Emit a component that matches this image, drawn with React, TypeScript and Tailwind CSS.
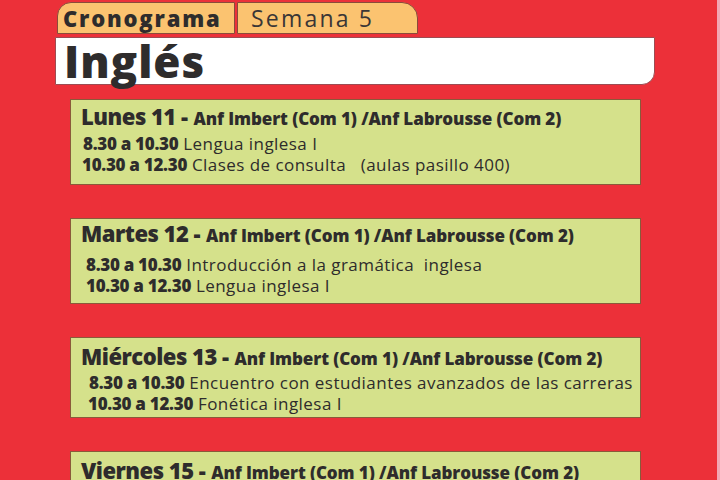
const days = [
  {
    day: "Lunes 11",
    pt: "pt-[3px]",
    gap: "mt-[1px]",
    indent: "pl-[1px]",
    h: "h-[86px]",
    rows: [
      ["8.30 a 10.30", "Lengua inglesa I", "pl-[1px]"],
      ["10.30 a 12.30", "Clases de consulta \u00a0 (aulas pasillo 400)", ""],
    ],
  },
  {
    day: "Martes 12",
    pt: "pt-[1px]",
    gap: "mt-[5px]",
    indent: "pl-[5px]",
    h: "h-[86px]",
    rows: [
      ["8.30 a 10.30", "Introducción a la gramática \u00a0inglesa", "pl-[0px]"],
      ["10.30 a 12.30", "Lengua inglesa I", ""],
    ],
  },
  {
    day: "Miércoles 13",
    pt: "pt-[5px]",
    gap: "mt-[0px]",
    indent: "pl-[7px]",
    h: "h-[81px]",
    rows: [
      ["8.30 a 10.30", "Encuentro con estudiantes avanzados de las carreras", "pl-[1px]"],
      ["10.30 a 12.30", "Fonética inglesa I", ""],
    ],
  },
  {
    day: "Viernes 15",
    pt: "pt-[5px]",
    gap: "mt-[0px]",
    indent: "pl-[4px]",
    h: "h-[86px]",
    rows: [],
  },
];

function DayCard({ d }: { d: (typeof days)[number] }) {
  return (
    <div className={`${d.h} w-[571px] shrink-0 border border-[#8a5a3a] bg-[#d5e18b] ${d.pt} pl-[10px] text-[#2e2c2c]`}>
      <div className="flex items-baseline whitespace-nowrap font-['Open_Sans',sans-serif] font-extrabold leading-[26px]">
        <span className="text-[22px] tracking-[-0.5px]">{d.day} -</span>
        <span className="ml-[6px] text-[17px] tracking-[-0.1px]">Anf Imbert (Com 1) /Anf Labrousse (Com 2)</span>
      </div>
      <div className={`${d.gap} ${d.indent} font-['Open_Sans',sans-serif] text-[17px] leading-[21px] tracking-[0.45px]`}>
        {d.rows.map(([time, text, pad]) => (
          <div key={time} className={`${pad} -mb-[0.5px] whitespace-pre`}>
            <span className="font-extrabold tracking-[-0.3px]">{time}</span> {text}
          </div>
        ))}
      </div>
    </div>
  );
}

export default function App() {
  return (
    <div className="h-[480px] w-[720px] overflow-hidden border-r-[3px] border-[#f2a6b4] bg-[#ec3039]">
      <div className="flex pl-[57px] pt-[2px]">
        <div className="flex h-[32px] w-[178px] items-center rounded-tl-[14px] border border-[#8a4b3a] bg-[#fbc370] pl-[5px] font-['Open_Sans',sans-serif] text-[22px] font-extrabold tracking-[1.8px] text-[#2e2c2c]">
          Cronograma
        </div>
        <div className="ml-[2px] flex h-[32px] w-[181px] items-center rounded-tr-[16px] border border-[#8a4b3a] bg-[#fbc370] pl-[13px] font-['Open_Sans',sans-serif] text-[23px] tracking-[2.2px] text-[#3a3636]">
          Semana 5
        </div>
      </div>
      <div className="ml-[55px] mt-[3px] flex h-[48px] w-[600px] items-center rounded-br-[13px] border border-[#9c4c52] bg-white pl-[8px] font-['Open_Sans',sans-serif] text-[44px] font-extrabold tracking-[0.9px] text-[#2e2c2c]">
        Inglés
      </div>
      <div className="ml-[70px] mt-[14px] flex flex-col gap-[33px]">
        {days.map((d) => (
          <DayCard key={d.day} d={d} />
        ))}
      </div>
    </div>
  );
}
